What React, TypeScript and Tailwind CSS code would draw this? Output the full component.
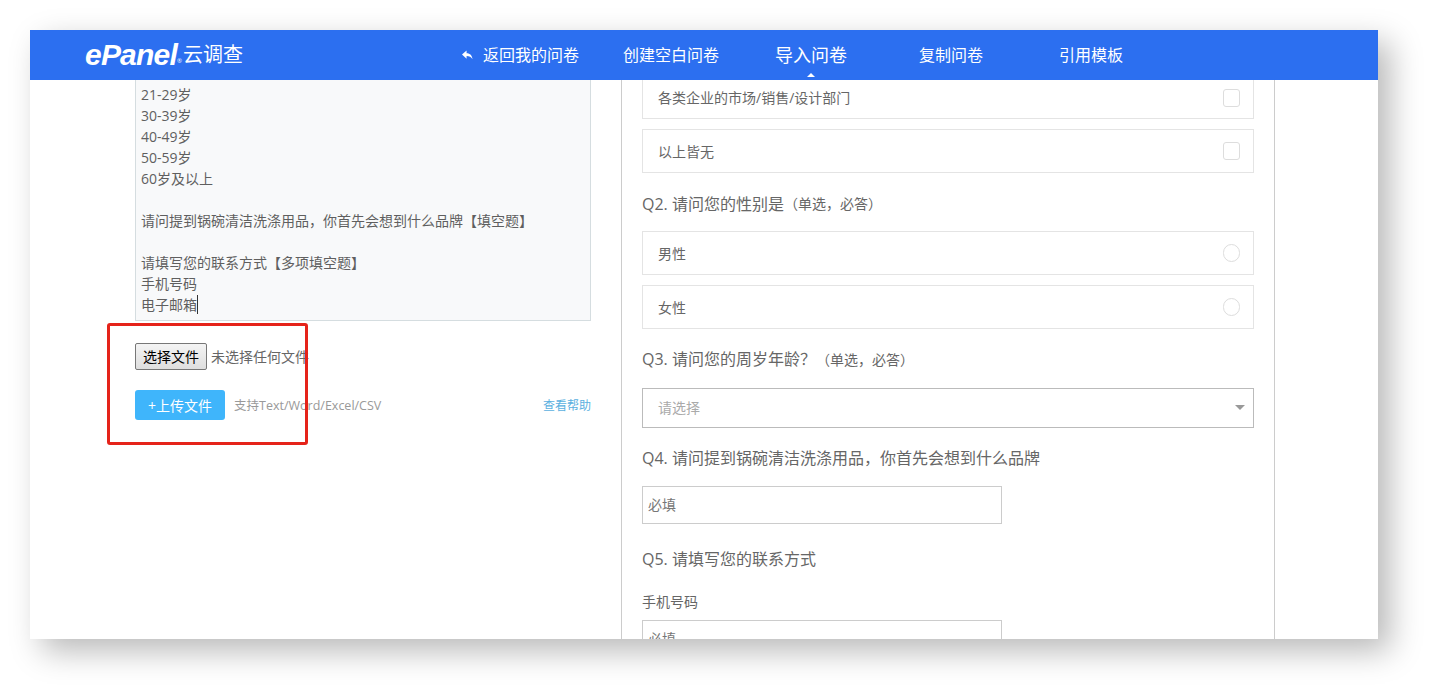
const font = '[font-family:"Open_Sans","Noto_Sans_CJK_SC",sans-serif]'

const nav = [
  { label: '创建空白问卷', className: 'ml-[44px]' },
  { label: '导入问卷', className: 'ml-[56px] text-[18px]', active: true },
  { label: '复制问卷', className: 'ml-[72px]' },
  { label: '引用模板', className: 'ml-[76px]' },
]

const lines = [
  '21-29岁',
  '30-39岁',
  '40-49岁',
  '50-59岁',
  '60岁及以上',
  '',
  '请问提到锅碗清洁洗涤用品，你首先会想到什么品牌【填空题】',
  '',
  '请填写您的联系方式【多项填空题】',
  '手机号码',
]

function Option({ label, round, className }: { label: string; round?: boolean; className: string }) {
  return (
    <div className={`flex w-[612px] items-center justify-between border border-[#e4e4e4] pr-[13px] pl-[15px] text-[14px] text-[#666666] ${className}`}>
      <span>{label}</span>
      <span className={`h-[18px] w-[17px] border border-[#dddddd] ${round ? 'rounded-full' : 'rounded-[3px]'}`} />
    </div>
  )
}

function Question({ no, text, note, className }: { no: string; text: string; note?: string; className: string }) {
  return (
    <div className={`flex items-center text-[16px] text-[#666666] ${className}`}>
      <span>
        {no}. {text}
      </span>
      {note && <span className="text-[14px]">{note}</span>}
    </div>
  )
}

export default function App() {
  return (
    <div className={`h-[691px] w-[1431px] overflow-hidden bg-white pt-[30px] pl-[30px] ${font}`}>
      <div className="relative flex h-[609px] w-[1348px] flex-col overflow-hidden bg-white shadow-[12px_12px_30px_rgba(0,0,0,0.28)]">
        <header className="flex h-[50px] shrink-0 items-center bg-[#2c6ff0] text-[16px] text-white">
          <div className="ml-[55px] flex w-[377px] items-center">
            <span className="[font-family:'Liberation_Sans',sans-serif] text-[30px] leading-none font-bold tracking-[-0.8px] italic">ePanel</span>
            <span className="mt-[12px] text-[6px] leading-none">®</span>
            <span className="ml-[1px] text-[20px] leading-none">云调查</span>
          </div>
          <svg viewBox="0 0 12 10" className="h-[10px] w-[11px] fill-white">
            <path d="M0 4.500 5 0v3c4 0 6 2.500 6.500 6.500C10 7 8 6 5 6v3z" />
          </svg>
          <span className="ml-[10px]">返回我的问卷</span>
          {nav.map((item) => (
            <span key={item.label} className={`relative ${item.className}`}>
              {item.label}
              {item.active && (
                <span className="absolute top-[31px] left-[32px] h-0 w-0 border-x-[4px] border-b-[4px] border-x-transparent border-b-white" />
              )}
            </span>
          ))}
        </header>

        <div className="flex min-h-0 flex-1 pl-[105px]">
          <div className="w-[456px] shrink-0">
            <div className="h-[241px] border-x border-b border-[#d5dde0] bg-[#f8f9fa] px-[5px] pt-[4px] text-[14px] leading-[21px] text-[#5f5f5f]">
              {lines.map((line, i) => (
                <div key={i} className="h-[21px]">
                  {line}
                </div>
              ))}
              <div className="h-[21px]">
                <span className="border-r border-[#333333]">电子邮箱</span>
              </div>
            </div>
            <div className="mt-[22px] flex items-center text-[14px]">
              <button type="button" className="h-[27px] w-[72px] rounded-[2px] border border-[#777777] bg-gradient-to-b from-[#f4f4f4] to-[#dedede] text-black">
                选择文件
              </button>
              <span className="ml-[4px] text-[#666666]">未选择任何文件</span>
            </div>
            <div className="mt-[20px] flex items-center">
              <button type="button" className="h-[30px] w-[90px] rounded-[3px] bg-[#3fb5fb] text-[14px] text-white">
                +上传文件
              </button>
              <span className="ml-[9px] pt-[2px] text-[12.500px] text-[#999999]">支持Text/Word/Excel/CSV</span>
              <a className="ml-auto pt-[1px] text-[12px] text-[#5bb0e0]">查看帮助</a>
            </div>
          </div>

          <div className="ml-[30px] w-[654px] shrink-0 border-x border-[#cccccc] pl-[20px]">
            <Option label="各类企业的市场/销售/设计部门" className="h-[39px] border-t-0 pb-[3px]" />
            <Option label="以上皆无" className="mt-[10px] h-[44px]" />
            <Question no="Q2" text="请问您的性别是" note="（单选，必答）" className="h-[58px] pt-[3px]" />
            <Option label="男性" round className="h-[44px]" />
            <Option label="女性" round className="mt-[10px] h-[44px]" />
            <Question no="Q3" text="请问您的周岁年龄？" note="（单选，必答）" className="h-[59px] pt-[1px]" />
            <div className="flex h-[40px] w-[612px] items-center justify-between border border-[#bbbbbb] pr-[8px] pb-[1px] pl-[15px] text-[14px] text-[#aaaaaa]">
              <span>请选择</span>
              <span className="h-0 w-0 border-x-[5px] border-t-[5px] border-x-transparent border-t-[#999999]" />
            </div>
            <Question no="Q4" text="请问提到锅碗清洁洗涤用品，你首先会想到什么品牌" className="h-[58px] pt-[1px]" />
            <div className="flex h-[38px] w-[360px] items-center border border-[#cccccc] pb-[1px] pl-[5px] text-[14px] text-[#777777]">必填</div>
            <Question no="Q5" text="请填写您的联系方式" className="mt-[21px] h-[28px]" />
            <div className="mt-[19px] text-[14px] leading-[20px] text-[#666666]">手机号码</div>
            <div className="mt-[8px] flex h-[38px] w-[360px] items-center border border-[#cccccc] pb-[1px] pl-[5px] text-[14px] text-[#777777]">必填</div>
          </div>
        </div>

        <div className="absolute top-[293px] left-[77px] h-[122px] w-[201px] rounded-[3px] border-[3px] border-[#e5231a]" />
      </div>
    </div>
  )
}
